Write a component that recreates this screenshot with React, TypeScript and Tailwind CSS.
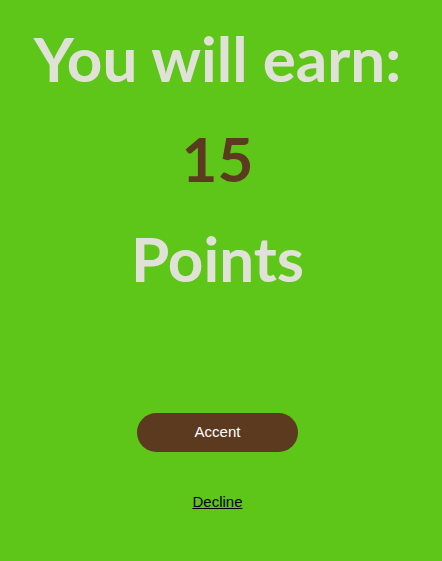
const App = () => {
  return (
    <div className="min-h-[561px] w-full bg-[#5ec618] flex flex-col items-center pt-[8px] pr-[7px]">
      <div className="font-['Lato',sans-serif] font-bold text-[62px] leading-[100px] text-center">
        <p className="text-[#e0e2d8]">You will earn:</p>
        <p className="text-[#5b3a1f]">15</p>
        <p className="text-[#e0e2d8]">Points</p>
      </div>
      <button
        type="button"
        className="mt-[105px] w-[161px] h-[39px] rounded-full bg-[#5b3a1f] text-white text-[15px] font-['Liberation_Sans',Arial,sans-serif]"
      >
        Accent
      </button>
      <a
        href="#"
        className="mt-[38px] text-black underline text-[15px] leading-6 font-['Liberation_Sans',Arial,sans-serif]"
      >
        Decline
      </a>
    </div>
  );
};

export default App;
